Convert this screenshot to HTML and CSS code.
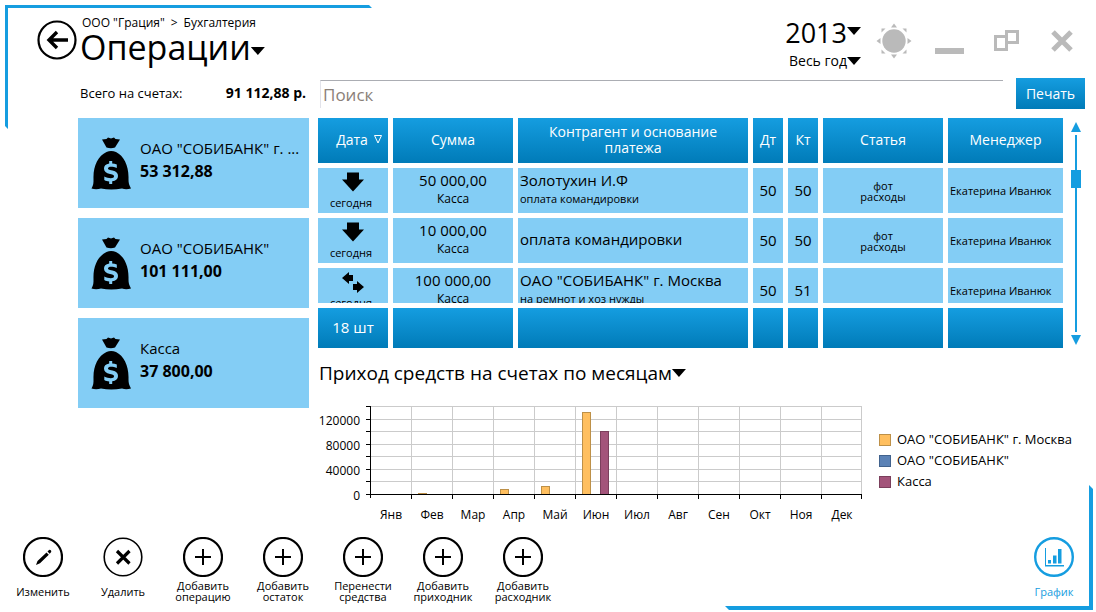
FILE: index.html
```html
<!DOCTYPE html>
<html lang="ru">
<head>
<meta charset="utf-8">
<title>Операции</title>
<link rel="stylesheet" href="styles.css">
</head>
<body>
<svg class="symbols" aria-hidden="true">
  <symbol id="bag" viewBox="0 0 40 53">
    <path d="M11 2.500 L15.500 2 L17 .5 L20 1.500 L23 .5 L24.500 2 L29 2.500 L24 10.500 Q20 12 15.500 10.500 Z"/>
    <path fill-rule="evenodd" d="M15.500 15 Q20 13 25 15 C33 19 38 29 37.500 42 C37.500 46 38 48 40 51.500 Q35 53 31 51.500 Q20 53.500 10 51.500 Q5 53 .5 51.500 C2.500 48 2.500 46 2.500 42 C2 29 7 19 15.500 15 Z M18.200 24 V26.500 C14.500 27.200 13 29 13 31.500 C13 34.500 15 36 19 37 C22.500 37.800 23 38.200 23 39.500 C23 42 17 41.500 13.300 39.500 V43 C15 44 16.500 44.300 18.200 44.400 V47 H21.200 V44.300 C25 43.800 27 42 27 39 C27 36 25.300 34.500 21.500 33.600 C17.500 32.600 17 32.300 17 31.300 C17 29 22.500 29.400 25.800 31 V27.500 C24.300 26.800 22.800 26.500 21.200 26.400 V24 Z"/>
  </symbol>
  <symbol id="plus" viewBox="0 0 40 40">
    <circle cx="20" cy="20" r="19" fill="none" stroke="currentColor" stroke-width="2.200"/>
    <path d="M20 12 V28 M12 20 H28" stroke="currentColor" stroke-width="2"/>
  </symbol>
  <symbol id="down" viewBox="0 0 22 20">
    <path d="M5 0 H17 V7 H22 L11 19 L0 7 H5 Z"/>
  </symbol>
</svg>

<div class="frame frame-start" aria-hidden="true"></div>
<div class="frame frame-end" aria-hidden="true"></div>

<div class="app">
  <header class="header">
    <button class="back" aria-label="Назад">
      <svg width="40" height="40" viewBox="0 0 40 40"><circle cx="20" cy="20" r="18.500" fill="none" stroke="#000" stroke-width="2.200"/><path d="M31 20 H12 M20 12 L12 20 L20 28" fill="none" stroke="#000" stroke-width="3.400"/></svg>
    </button>
    <div class="heading">
      <nav class="crumbs"><a href="#">ООО "Грация"</a><span>&gt;</span><a href="#">Бухгалтерия</a></nav>
      <h1><button class="drop title">Операции<i class="caret"></i></button></h1>
    </div>
    <div class="period">
      <button class="drop year">2013<i class="caret"></i></button>
      <button class="drop span">Весь год<i class="caret"></i></button>
    </div>
    <div class="window-controls">
      <button aria-label="Тема"><svg width="36" height="36" viewBox="-18 -18 36 36"><circle r="11.700"/><path d="M-3 -13.500 L0 -17.500 L3 -13.500 Z M-3 13.500 L0 17.500 L3 13.500 Z M-13.500 -3 L-17.500 0 L-13.500 3 Z M13.500 -3 L17.500 0 L13.500 3 Z M-12.500 -8.500 V-12.500 H-8.500 Z M12.500 -8.500 V-12.500 H8.500 Z M-12.500 8.500 V12.500 H-8.500 Z M12.500 8.500 V12.500 H8.500 Z"/></svg></button>
      <button aria-label="Свернуть"><svg width="30" height="36" viewBox="0 0 30 36"><path d="M0 25 H29 V31 H0 Z"/></svg></button>
      <button aria-label="Развернуть"><svg width="26" height="36" viewBox="0 0 26 36"><path fill="none" stroke="#bababa" stroke-width="3" d="M13.500 8.500 H24.500 V19.500 H13.500 Z M13.500 13.500 H2.500 V26.500 H13.500 Z"/></svg></button>
      <button aria-label="Закрыть"><svg width="22" height="36" viewBox="0 0 22 36"><path fill="none" stroke="#bababa" stroke-width="5" d="M2 9 L20 27 M20 9 L2 27"/></svg></button>
    </div>
  </header>

  <main class="main">
    <section class="accounts">
      <p class="total"><span>Всего на счетах:</span><b>91 112,88 р.</b></p>
      <div class="card"><svg class="bag"><use href="#bag"/></svg><div class="card-text"><p class="name">ОАО "СОБИБАНК" г. ...</p><b>53 312,88</b></div></div>
      <div class="card"><svg class="bag"><use href="#bag"/></svg><div class="card-text"><p class="name">ОАО "СОБИБАНК"</p><b>101 111,00</b></div></div>
      <div class="card"><svg class="bag"><use href="#bag"/></svg><div class="card-text"><p class="name">Касса</p><b>37 800,00</b></div></div>
    </section>

    <section class="content">
      <div class="search-row">
        <input class="search" type="text" placeholder="Поиск" aria-label="Поиск">
        <button class="print">Печать</button>
      </div>

      <div class="table-row">
        <table class="ops">
          <thead>
            <tr><th>Дата<svg class="sort" width="8" height="9" viewBox="0 0 8 9"><path d="M.5 .5 H7.500 L4 8 Z" fill="none" stroke="#fff"/></svg></th><th>Сумма</th><th>Контрагент и основание платежа</th><th>Дт</th><th>Кт</th><th>Статья</th><th>Менеджер</th></tr>
          </thead>
          <tbody>
            <tr>
              <td class="date"><svg class="dir"><use href="#down"/></svg><span>сегодня</span></td>
              <td class="sum"><span class="big">50 000,00</span><span>Касса</span></td>
              <td class="party"><span class="big">Золотухин И.Ф</span><span>оплата командировки</span></td>
              <td class="code">50</td><td class="code">50</td>
              <td class="item">фот<br>расходы</td><td class="manager">Екатерина Иванюк</td>
            </tr>
            <tr>
              <td class="date"><svg class="dir"><use href="#down"/></svg><span>сегодня</span></td>
              <td class="sum"><span class="big">10 000,00</span><span>Касса</span></td>
              <td class="party"><span class="big">оплата командировки</span></td>
              <td class="code">50</td><td class="code">50</td>
              <td class="item">фот<br>расходы</td><td class="manager">Екатерина Иванюк</td>
            </tr>
            <tr>
              <td class="date"><svg class="dir" viewBox="0 0 22 21"><path d="M0 6 L7 0 V3 H11 V9 H7 V12 Z M22 15 L15 9 V12 H11 V18 H15 V21 Z"/></svg><span>сегодня</span></td>
              <td class="sum"><span class="big">100 000,00</span><span>Касса</span></td>
              <td class="party"><span class="big">ОАО "СОБИБАНК" г. Москва</span><span>на ремнот и хоз нужды</span></td>
              <td class="code">50</td><td class="code">51</td>
              <td class="item"></td><td class="manager">Екатерина Иванюк</td>
            </tr>
          </tbody>
          <tfoot>
            <tr><td>18 шт</td><td></td><td></td><td></td><td></td><td></td><td></td></tr>
          </tfoot>
        </table>
        <div class="scroll">
          <button class="up" aria-label="Вверх"></button>
          <div class="track"><div class="thumb"></div></div>
          <button class="down" aria-label="Вниз"></button>
        </div>
      </div>

      <h2><button class="drop chart-title">Приход средств на счетах по месяцам<i class="caret"></i></button></h2>
      <div class="chart-row">
        <svg class="chart" width="550" height="130" viewBox="0 0 550 130" role="img" aria-label="Приход средств на счетах по месяцам">
          <g shape-rendering="crispEdges">
            <path fill="none" stroke="#cbcbcb" d="M52 6.500 H544 M52 19.500 H544 M52 31.500 H544 M52 44.500 H544 M52 56.500 H544 M52 69.500 H544 M52 81.500 H544 M93.500 6 V94 M134.500 6 V94 M175.500 6 V94 M216.500 6 V94 M257.500 6 V94 M298.500 6 V94 M339.500 6 V94 M380.500 6 V94 M421.500 6 V94 M462.500 6 V94 M503.500 6 V94 M543.500 6 V94"/>
            <g fill="#ffbf5f" stroke="#bd9048">
              <rect x="100.500" y="93.500" width="8" height="1"/>
              <rect x="182.500" y="89.500" width="8" height="5"/>
              <rect x="223.500" y="86.500" width="8" height="8"/>
              <rect x="264.500" y="12.500" width="8" height="82"/>
            </g>
            <rect x="282.500" y="31.500" width="8" height="63" fill="#a3547a" stroke="#7b3f5c"/>
            <path fill="none" stroke="#000" d="M52.500 6 V98 M48 94.500 H544 M48 6.500 H52 M48 19.500 H52 M48 31.500 H52 M48 44.500 H52 M48 56.500 H52 M48 69.500 H52 M48 81.500 H52 M93.500 94 V99 M134.500 94 V99 M175.500 94 V99 M216.500 94 V99 M257.500 94 V99 M298.500 94 V99 M339.500 94 V99 M380.500 94 V99 M421.500 94 V99 M462.500 94 V99 M503.500 94 V99 M543.500 94 V99"/>
          </g>
          <g text-anchor="end">
            <text x="42" y="25">120000</text><text x="42" y="50">80000</text><text x="42" y="75">40000</text><text x="42" y="100">0</text>
          </g>
          <g text-anchor="middle">
            <text x="73" y="119">Янв</text><text x="114" y="119">Фев</text><text x="155" y="119">Мар</text><text x="196" y="119">Апр</text><text x="237" y="119">Май</text><text x="278" y="119">Июн</text><text x="319" y="119">Июл</text><text x="360" y="119">Авг</text><text x="401" y="119">Сен</text><text x="442" y="119">Окт</text><text x="483" y="119">Ноя</text><text x="524" y="119">Дек</text>
          </g>
        </svg>
        <ul class="legend">
          <li class="orange">ОАО "СОБИБАНК" г. Москва</li>
          <li class="blue">ОАО "СОБИБАНК"</li>
          <li class="plum">Касса</li>
        </ul>
      </div>
    </section>
  </main>

  <footer class="toolbar">
    <button class="tool"><svg viewBox="0 0 40 40"><circle cx="20" cy="20" r="19" fill="none" stroke="currentColor" stroke-width="2.200"/><path d="M13 28 L14.500 24 L23.500 15.500 L25.800 17.800 L17 26.300 Z M24.500 14.600 L26 13 Q27 12.500 27.800 13.300 Q28.500 14 28.200 15 L26.700 16.800 Z"/></svg><span>Изменить</span></button>
    <button class="tool"><svg viewBox="0 0 40 40"><circle cx="20" cy="20" r="18.800" fill="none" stroke="currentColor" stroke-width="1.600"/><path d="M14 14 L26.500 26.500 M26.500 14 L14 26.500" stroke="currentColor" stroke-width="3.200"/></svg><span>Удалить</span></button>
    <button class="tool"><svg><use href="#plus"/></svg><span>Добавить операцию</span></button>
    <button class="tool"><svg><use href="#plus"/></svg><span>Добавить остаток</span></button>
    <button class="tool"><svg><use href="#plus"/></svg><span>Перенести средства</span></button>
    <button class="tool"><svg><use href="#plus"/></svg><span>Добавить приходник</span></button>
    <button class="tool"><svg><use href="#plus"/></svg><span>Добавить расходник</span></button>
    <button class="tool graph"><svg viewBox="0 0 40 40"><circle cx="20" cy="20" r="18.800" fill="none" stroke="currentColor" stroke-width="2.400"/><path d="M11.500 11 V28" stroke="currentColor"/><path d="M11 28 H30 V29.500 H11 Z M14 23 H17 V26.500 H14 Z M19 18.500 H22.500 V26.500 H19 Z M24 12 H27.500 V26.500 H24 Z"/></svg><span>График</span></button>
  </footer>
</div>
</body>
</html>
```
FILE: styles.css
```css
* { box-sizing: border-box; }

body {
  margin: 0;
  background: #fff;
  color: #000;
  font-family: "Open Sans", "Noto Sans", sans-serif;
  font-size: 12px;
}

h1, h2, p, ul { margin: 0; padding: 0; font-weight: 400; }

button {
  margin: 0;
  padding: 0;
  border: 0;
  background: none;
  color: inherit;
  font: inherit;
  cursor: pointer;
}

a { color: inherit; text-decoration: none; }
svg { display: block; flex: none; }
.symbols { position: absolute; width: 0; height: 0; }

/* Corner frames */
.frame { position: absolute; pointer-events: none; }
.frame-start {
  top: 5px;
  left: 5px;
  width: 367px;
  height: 124px;
  border: solid #159de0;
  border-width: 3px 0 0 3px;
  clip-path: polygon(0 0, 364px 0, 367px 3px, 3px 3px, 3px 124px, 0 121px);
}
.frame-end {
  right: 3px;
  bottom: 2px;
  width: 368px;
  height: 125px;
  border: solid #159de0;
  border-width: 0 4px 4px 0;
  clip-path: polygon(0 121px, 364px 121px, 364px 0, 368px 4px, 368px 125px, 4px 125px);
}

.app {
  display: flex;
  flex-direction: column;
  min-height: 100vh;
}

/* Header */
.header {
  display: flex;
  align-items: flex-start;
  height: 78px;
  padding: 14px 23px 0 37px;
}
.back { margin-top: 6px; }
.heading { flex: 1; padding-left: 3px; }
.crumbs { display: flex; gap: 6px; padding-left: 2px; line-height: 18px; }
.drop { display: flex; align-items: center; white-space: nowrap; }
.caret {
  flex: none;
  width: 14px;
  height: 8px;
  background: #000;
  clip-path: polygon(0 0, 100% 0, 50% 100%);
}
.title { font-size: 34px; line-height: 30px; }
.title .caret { margin-top: 8px; }
.period {
  display: flex;
  flex-direction: column;
  align-items: flex-end;
  margin: 3px 15px 0 0;
}
.year { font-size: 27px; line-height: 32px; }
.year .caret { margin-bottom: 4px; }
.span { font-size: 14px; line-height: 24px; }
.window-controls {
  display: flex;
  gap: 24px;
  padding-top: 9px;
  fill: #bababa;
}
.window-controls button:nth-child(2) { margin-right: 4px; margin-left: -1px; }
.window-controls button:nth-child(4) { margin-left: 8px; }

/* Body */
.main {
  display: flex;
  flex: 1;
  gap: 9px;
  padding: 0 11px 0 78px;
}
.accounts {
  display: flex;
  flex: none;
  flex-direction: column;
  gap: 10px;
  width: 231px;
}
.total {
  display: flex;
  justify-content: space-between;
  padding: 0 3px 0 2px;
  font-size: 13px;
  line-height: 30px;
}
.total b { font-size: 14px; }
.card {
  display: flex;
  align-items: center;
  gap: 9px;
  height: 90px;
  padding: 0 8px 0 13px;
  background: #83cdf5;
}
.bag { width: 40px; height: 53px; }
.card-text { min-width: 0; padding-bottom: 6px; font-size: 15px; line-height: 23px; }
.card-text b { font-size: 16px; }
.name { overflow: hidden; text-overflow: ellipsis; white-space: nowrap; }

.content { flex: 1; min-width: 0; }
.search-row { display: flex; gap: 13px; padding-left: 2px; }
.search {
  flex: 1;
  min-width: 0;
  height: 28px;
  margin-top: 2px;
  padding: 0 2px;
  border: solid #abadb3;
  border-width: 1px 0 0 1px;
  border-left-color: #e2e3ea;
  background: #fff;
  color: #000;
  font: 17px "Open Sans", "Noto Sans", sans-serif;
}
.search::placeholder { color: #8a8078; opacity: 1; }
.print, .ops th, .ops tfoot td {
  background: linear-gradient(#159de0, #007bb8);
  color: #fff;
  font-size: 15px;
  font-weight: 400;
}
.print { width: 69px; height: 31px; font-size: 14px; }

/* Operations table */
.table-row { display: flex; gap: 8px; margin-top: 9px; }
.ops { display: flex; flex: 1; flex-direction: column; gap: 5px; }
.ops thead, .ops tfoot { display: block; }
.ops tbody {
  display: flex;
  flex-direction: column;
  gap: 5px;
  height: 135px;
  overflow: hidden;
}
.ops tr {
  display: grid;
  flex: none;
  grid-template-columns: 70fr 120fr 230fr 30fr 30fr 120fr 115fr;
  gap: 5px;
  height: 45px;
}
.ops th, .ops td {
  display: flex;
  align-items: center;
  justify-content: center;
  min-width: 0;
  padding: 0 0 2px;
  line-height: 16px;
  text-align: center;
}
.ops th { font-size: 14px; }
.ops th:first-child { padding-left: 12px; }
.ops th:nth-child(3) { padding: 0 24px 2px; }
.ops tfoot tr { height: 40px; }
.sort { margin-left: 6px; }
.ops tbody td { background: #83cdf5; white-space: nowrap; }
.ops .date { flex-direction: column; justify-content: flex-start; padding: 4px 4px 0 0; font-size: 11px; }
.dir { width: 22px; height: 21px; margin: 0 0 2px 4px; }
.ops .sum, .ops .party { flex-direction: column; gap: 3px; padding-bottom: 3px; }
.ops .party { align-items: flex-start; padding-left: 2px; font-size: 11px; }
.big { font-size: 15px; }
.ops .code { font-size: 15px; }
.ops .item { padding: 0; font-size: 11px; line-height: 11px; }
.ops .manager { justify-content: flex-start; padding: 0 0 0 2px; font-size: 11px; }

.scroll {
  display: flex;
  flex-direction: column;
  align-items: center;
  gap: 3px;
  width: 10px;
  margin: 4px 4px 3px 0;
}
.up, .down { flex: none; width: 10px; height: 10px; background: #159de0; }
.up { clip-path: polygon(50% 0, 100% 100%, 0 100%); }
.down { clip-path: polygon(0 0, 100% 0, 50% 100%); }
.track { position: relative; flex: 1; width: 2px; background: #159de0; }
.thumb {
  position: absolute;
  top: 35px;
  left: -4px;
  width: 10px;
  height: 18px;
  background: #159de0;
}

/* Chart */
.chart-title { margin: 12px 0 0 1px; font-size: 19px; line-height: 26px; }
.chart-row { display: flex; gap: 11px; margin-top: 14px; }
.chart { font-size: 12px; }
.legend { padding-top: 29px; list-style: none; white-space: nowrap; font-size: 13px; line-height: 21px; }
.legend li { display: flex; align-items: center; gap: 6px; }
.legend li::before {
  content: "";
  box-sizing: border-box;
  width: 12px;
  height: 12px;
  border-width: 1px;
  border-style: solid;
}
.orange::before { border-color: #bd9048; background: #ffbf5f; }
.blue::before { border-color: #41628d; background: #5b82b6; }
.plum::before { border-color: #7b3f5c; background: #a3547a; }

/* Toolbar */
.toolbar {
  display: flex;
  padding: 7px 2px 9px 3px;
}
.tool {
  display: flex;
  flex-direction: column;
  align-items: center;
  gap: 2px;
  width: 80px;
  font-size: 11px;
  line-height: 11px;
}
.tool svg { width: 40px; height: 40px; fill: currentColor; }
.tool span { display: flex; align-items: center; height: 24px; padding: 0 8px; }
.graph { margin-left: auto; color: #159de0; }
```
